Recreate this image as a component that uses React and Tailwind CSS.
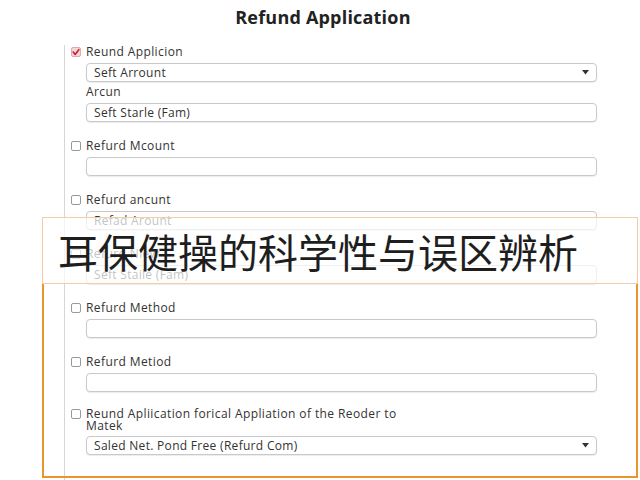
const fields = [
  { label: 'Refurd Mcount', value: '' },
  { label: 'Refurd ancunt', value: 'Refad Arount' },
  { label: 'Refurd Niew', value: 'Seft Staile (Fam)' },
  { label: 'Refurd Method', value: '' },
  { label: 'Refurd Metiod', value: '' },
];

function Box({ checked }) {
  if (checked) {
    return (
      <span className="w-[10px] h-[10px] shrink-0 rounded-[2px] bg-[#f6d6d8] border border-[#e6a7ab] flex items-center justify-center">
        <svg width="9" height="9" viewBox="0 0 10 10">
          <path d="M1.5 4.5 L4 7.5 L8.5 1.5" fill="none" stroke="#c8202c" strokeWidth="2" strokeLinecap="round" strokeLinejoin="round" />
        </svg>
      </span>
    );
  }
  return <span className="block w-[10px] h-[10px] shrink-0 rounded-[2px] border border-[#9a9a9a] bg-white" />;
}

function Input({ value, select }) {
  return (
    <div className="mt-[4px] ml-[15px] w-[511px] h-[19px] rounded-[4px] border border-[#c9c9c9] shadow-[0_1px_1px_rgba(0,0,0,0.08)] bg-white flex items-center justify-between px-[7px] text-[12px] tracking-[0.3px] text-[#333]">
      <span>{value}</span>
      {select && (
        <svg width="7" height="5" viewBox="0 0 7 5">
          <path d="M0 0 H7 L3.5 4.5 Z" fill="#333" />
        </svg>
      )}
    </div>
  );
}

function Label({ text, checked }) {
  return (
    <div className="flex items-center gap-[5px] h-[14px] text-[12px] tracking-[0.4px] text-[#333]">
      <Box checked={checked} />
      <span>{text}</span>
    </div>
  );
}

export default function App() {
  return (
    <div className="w-[640px] h-[480px] bg-white relative overflow-hidden" style={{ fontFamily: '"Open Sans", "Noto Sans", sans-serif' }}>
      <h1 className="pt-[4px] h-[45px] text-center text-[18px] font-bold tracking-[0.2px] text-[#222] pl-[6px]">Refund Application</h1>

      <div className="ml-[64px] border-l border-[#d6d6d6] pl-[6px] h-[435px] flex flex-col">
        {/* first group */}
        <div>
          <Label text="Reund Applicion" checked />
          <Input value="Seft Arrount" select />
          <div className="ml-[15px] mt-[3px] h-[14px] text-[12px] tracking-[0.4px] text-[#333] flex items-center">Arcun</div>
          <Input value="Seft Starle (Fam)" />
        </div>

        {fields.map((f, i) => (
          <div key={i} className="mt-[17px]">
            <Label text={f.label} />
            <Input value={f.value} />
          </div>
        ))}

        <div className="mt-[16px]">
          <div className="flex items-start gap-[5px] text-[12px] leading-[12px] tracking-[0.4px] text-[#333]">
            <span className="mt-[1px] block"><Box /></span>
            <span>Reund Apliication forical Appliation of the Reoder to<br />Matek</span>
          </div>
          <Input value="Saled Net. Pond Free (Refurd Com)" select />
        </div>
      </div>

      {/* caption overlay */}
      <div className="absolute left-[42px] top-[217px] w-[596px] h-[261px] flex flex-col">
        <div className="h-[67px] bg-white/70 border border-[#f4cda5] flex items-center pl-[15px]">
          <span className="text-[40px] leading-none text-[#1e1e1e]" style={{ fontFamily: '"Noto Sans CJK SC", sans-serif' }}>耳保健操的科学性与误区辨析</span>
        </div>
        <div className="flex-1 border-2 border-t-0 border-[#e8952f]" />
      </div>
    </div>
  );
}
